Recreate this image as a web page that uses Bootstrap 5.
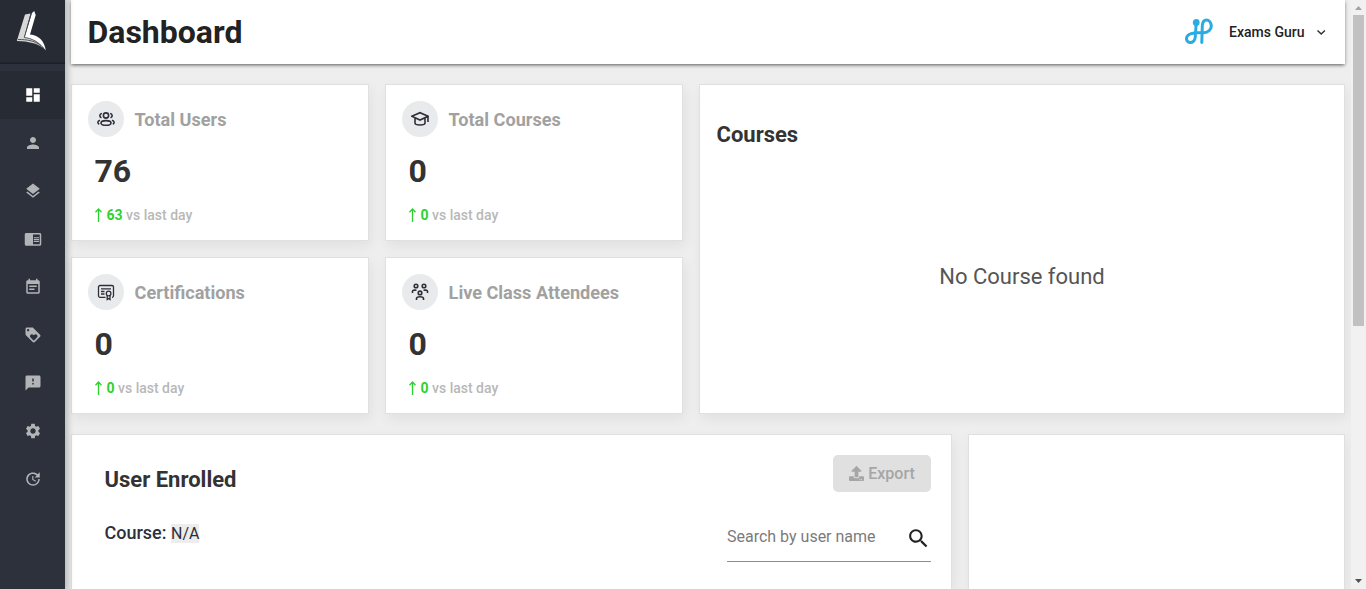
<!DOCTYPE html>
<html lang="en">
<head>
<meta charset="utf-8">
<meta name="viewport" content="width=device-width, initial-scale=1">
<title>Dashboard</title>
<link href="https://cdn.jsdelivr.net/npm/bootstrap@5.3.0/dist/css/bootstrap.min.css" rel="stylesheet">
<style>
body{font-family:Roboto,"Liberation Sans",sans-serif;background:#eee;color:#333;height:100vh}
.side{width:65px;background:#2d313b;box-shadow:0 0 6px 3px rgba(0,0,0,.22);z-index:3}
.brand{height:64px;background:#272b34;box-shadow:inset 0 -2px 2px -1px rgba(0,0,0,.4);margin-bottom:7px}
.side a{height:48px;color:#b3b4b8}
.side a svg{width:18px;height:18px;fill:currentColor}
.side a.active{background:#272b34;color:#fff}
.page{padding:0 6px}
.topbar{height:64px;background:#fff;padding:0 16.5px;box-shadow:0 2px 3px -1px rgba(0,0,0,.4),0 1px 4px rgba(0,0,0,.3);margin-bottom:20px}
.topbar h1{font-size:32px;font-weight:700;color:#222;line-height:40px}
.account{font-size:14px;font-weight:500;color:#222}
.tiles{display:grid;grid-template-columns:298px 298px 646px;grid-template-rows:157px 157px;gap:16px;margin-bottom:20px}
.panel{background:#fff;border:1px solid #e0e0e0;box-shadow:2px 5px 12px rgba(0,0,0,.06)}
.tall{grid-column:3;grid-row:1/3}
.tile{padding:16px}
.disc{width:36px;height:36px;background:#e9eaec}
.disc svg{width:18px;height:18px;fill:none;stroke:#2d303b;stroke-width:1.6}
.disc svg.fine{stroke-width:1.3}
.tile h2{font-size:18.1px;font-weight:700;color:#a1a1a1;line-height:24px;padding-top:2px;margin-left:10.6px}
.num{font-size:32px;font-weight:700;line-height:40px;margin:14px 0 0 6.5px}
.trend{font-size:14px;font-weight:500;line-height:20px;color:#b8b8b8;margin:14px 0 0 6px}
.trend b{color:#2bd22f;font-weight:700}
.trend svg{width:9px;height:14px;margin-right:3.5px;fill:none;stroke:#2bd22f;stroke-width:1.3}
.title{font-size:22px;font-weight:700;line-height:28px}
.tall .title{padding-left:.5px}
.none-found{font-size:22px;line-height:28px;color:#555;margin-top:114px}
.enrolled{width:881px;padding:20px 20px 0 32.5px}
.enrolled .title{margin-top:10.5px}
.extra{width:377px}
.export{height:37px;width:98px;background:#e0e0e0;color:#a6a6a6;font-size:16px;font-weight:500;border-radius:5px}
.course-row{margin-top:19px}
.course{font-size:18px;font-weight:500;color:#2d303b;line-height:24px}
.course span{font-size:16px;font-weight:400;background:#ededed;line-height:19px}
.search{width:204px;height:49px;border-bottom:1px solid #8d8d8d;font-size:16px;color:#7b7b7b}
.rail{width:15px;background:#f1f1f1;z-index:2}
.thumb{width:11px;height:311px;background:#c1c1c1}
</style>
<script src="https://cdn.jsdelivr.net/npm/bootstrap@5.3.0/dist/js/bootstrap.bundle.min.js"></script>
</head>
<body class="d-flex overflow-hidden">
<nav class="side d-flex flex-column flex-shrink-0 position-relative">
  <div class="brand d-flex justify-content-center flex-shrink-0">
    <svg class="me-1" width="32" height="64" viewBox="0 0 32 64"><path fill="#d8d8d8" d="M10 14.500l5.500-1-6 22.500 10 3c4 2 7 5 9 9.500C22 43 14 41.500 1.800 41z"/><path fill="#fff" d="M17 13l2.200-2 1.500 4L15 34.500c9 .5 14.500 7 15.800 16C25 42 18 38.500 9.500 37.200z"/><path fill="none" stroke="#444751" stroke-width=".9" d="M16 14L9.300 37.500C17 38.500 24 42 28.500 48.500M3 39.500c9 0 16 1 23 6"/></svg>
  </div>
  <a href="#" class="active d-flex align-items-center justify-content-center"><svg viewBox="0 0 24 24"><path d="M3 13h8V3H3v10zm0 8h8v-6H3v6zm10 0h8V11h-8v10zm0-18v6h8V3h-8z"/></svg></a>
  <a href="#" class="d-flex align-items-center justify-content-center"><svg viewBox="0 0 24 24"><path d="M12 12c2.210 0 4-1.790 4-4s-1.790-4-4-4-4 1.790-4 4 1.790 4 4 4zm0 2c-2.670 0-8 1.340-8 4v2h16v-2c0-2.660-5.330-4-8-4z"/></svg></a>
  <a href="#" class="d-flex align-items-center justify-content-center"><svg viewBox="0 0 24 24"><path d="M11.990 18.540l-7.370-5.730L3 14.070l9 7 9-7-1.630-1.270-7.380 5.740zM12 16l7.360-5.730L21 9l-9-7-9 7 1.630 1.270L12 16z"/></svg></a>
  <a href="#" class="d-flex align-items-center justify-content-center"><svg viewBox="0 0 24 24"><path d="M13 12h7v1.500h-7zm0-2.500h7V11h-7zm0 5h7V16h-7zM21 4H3c-1.100 0-2 .9-2 2v13c0 1.100.9 2 2 2h18c1.100 0 2-.9 2-2V6c0-1.100-.9-2-2-2zm0 15h-9V6h9v13z"/></svg></a>
  <a href="#" class="d-flex align-items-center justify-content-center"><svg viewBox="0 0 24 24"><path d="M17 10H7v2h10v-2zm2-7h-1V1h-2v2H8V1H6v2H5c-1.110 0-1.990.9-1.990 2L3 19c0 1.100.89 2 2 2h14c1.100 0 2-.9 2-2V5c0-1.100-.9-2-2-2zm0 16H5V8h14v11zm-5-5H7v2h7v-2z"/></svg></a>
  <a href="#" class="d-flex align-items-center justify-content-center"><svg viewBox="0 0 24 24"><path d="M21.410 11.580l-9-9C12.050 2.220 11.550 2 11 2H4c-1.100 0-2 .9-2 2v7c0 .55.22 1.050.59 1.420l9 9c.36.36.86.58 1.410.58.55 0 1.050-.22 1.410-.59l7-7c.37-.36.59-.86.59-1.410 0-.55-.23-1.060-.59-1.420zM5.500 7C4.670 7 4 6.330 4 5.500S4.670 4 5.500 4 7 4.670 7 5.500 6.330 7 5.500 7zm11.770 8.270L13 19.540l-4.270-4.270C8.280 14.810 8 14.190 8 13.500c0-1.380 1.120-2.500 2.500-2.500.69 0 1.320.28 1.770.74l.73.72.73-.73c.45-.45 1.080-.73 1.770-.73 1.380 0 2.500 1.120 2.500 2.500 0 .69-.28 1.320-.73 1.770z"/></svg></a>
  <a href="#" class="d-flex align-items-center justify-content-center"><svg viewBox="0 0 24 24"><path d="M20 2H4c-1.100 0-1.990.9-1.990 2L2 22l4-4h14c1.100 0 2-.9 2-2V4c0-1.100-.9-2-2-2zm-7 12h-2v-2h2v2zm0-4h-2V6h2v4z"/></svg></a>
  <a href="#" class="d-flex align-items-center justify-content-center"><svg viewBox="0 0 24 24"><path d="M19.140 12.940c.04-.3.060-.61.060-.94 0-.32-.02-.64-.07-.94l2.030-1.580c.18-.14.23-.41.12-.61l-1.920-3.320c-.12-.22-.37-.29-.59-.22l-2.390.96c-.5-.38-1.030-.7-1.620-.94l-.36-2.540c-.04-.24-.24-.41-.48-.41h-3.840c-.24 0-.43.17-.47.41l-.36 2.540c-.59.24-1.130.57-1.620.94l-2.390-.96c-.22-.08-.47 0-.59.22L2.740 8.870c-.12.21-.08.47.12.61l2.030 1.580c-.05.3-.09.63-.09.94s.02.640.070.940l-2.030 1.580c-.18.14-.23.41-.12.610l1.920 3.320c.12.22.37.29.59.22l2.390-.96c.5.38 1.030.7 1.620.940l.36 2.540c.05.24.24.41.48.41h3.840c.24 0 .44-.17.47-.41l.36-2.540c.59-.24 1.130-.56 1.620-.940l2.390.960c.22.080.47 0 .59-.22l1.920-3.320c.12-.22.07-.47-.12-.610l-2.010-1.580zM12 15.600c-1.980 0-3.600-1.620-3.600-3.600s1.620-3.600 3.600-3.600 3.600 1.620 3.600 3.600-1.620 3.600-3.600 3.600z"/></svg></a>
  <a href="#" class="d-flex align-items-center justify-content-center"><svg viewBox="0 0 24 24"><path d="M21 10.120h-6.780l2.740-2.820c-2.730-2.700-7.150-2.800-9.880-.1-2.730 2.710-2.730 7.080 0 9.790s7.150 2.710 9.880 0C18.320 15.650 19 14.080 19 12.100h2c0 1.980-.88 4.550-2.640 6.290-3.510 3.480-9.210 3.480-12.720 0-3.500-3.470-3.530-9.110-.02-12.580s9.140-3.470 12.650 0L21 3v7.120zM12.500 8v4.250l3.500 2.080-.72 1.210L11 13V8h1.500z"/></svg></a>
</nav>

<main class="page flex-grow-1 d-flex flex-column">
  <header class="topbar d-flex align-items-center justify-content-between flex-shrink-0">
    <h1 class="mb-0">Dashboard</h1>
    <div class="account d-flex align-items-center">
      <svg width="28" height="28" viewBox="0 0 28 28" fill="none" stroke="#2aace2" stroke-width="3" stroke-linecap="round"><path d="M11.200 5l-.9 14c-.3 4-3 6-5.500 5.500-3.500-.7-4.300-4.500-2-7 2-2.300 6-2.700 10-2.800h6c4.500 0 7.700-3.500 7.500-7C26 4.500 24 2 21.500 2c-3 0-4 3-4.200 6l-.5 16.500"/><circle cx="11.200" cy="4.500" r="1.900" fill="#2aace2"/></svg>
      <span class="ms-3">Exams Guru</span>
      <svg class="ms-2" width="16" height="16" viewBox="0 0 16 16" fill="none" stroke="#333" stroke-width="1.500"><path d="M4.500 6.500L8.200 10l3.700-3.500"/></svg>
    </div>
  </header>

  <section class="tiles flex-shrink-0">
    <div class="panel tile">
      <div class="d-flex align-items-center">
        <span class="disc rounded-circle d-flex align-items-center justify-content-center"><svg viewBox="0 0 18 18"><circle cx="9" cy="5.500" r="2.600"/><ellipse cx="9" cy="12.900" rx="5" ry="2.300"/><path d="M5 3.500C2.500 3.500 2 7 4.500 7.700M13 3.500c2.500 0 3 3.500.5 4.200M3 10.200c-2.500.8-2.800 3-.8 4M15 10.200c2.500.8 2.800 3 .8 4"/></svg></span>
        <h2 class="mb-0">Total Users</h2>
      </div>
      <div class="num">76</div>
      <p class="trend mb-0 d-flex align-items-center"><svg viewBox="0 0 9 14"><path d="M4.500 14V1M1.500 4.200l3-3.200 3 3.200"/></svg><span><b>63</b> vs last day</span></p>
    </div>
    <div class="panel tile">
      <div class="d-flex align-items-center">
        <span class="disc rounded-circle d-flex align-items-center justify-content-center"><svg viewBox="0 0 18 18"><path d="M.8 6.300L9 2.700l8 3.600L9 10zM4 8v5c0 1 2 2 5 2s5-1 5-2V8M17 6.500V12"/></svg></span>
        <h2 class="mb-0">Total Courses</h2>
      </div>
      <div class="num">0</div>
      <p class="trend mb-0 d-flex align-items-center"><svg viewBox="0 0 9 14"><path d="M4.500 14V1M1.500 4.200l3-3.200 3 3.200"/></svg><span><b>0</b> vs last day</span></p>
    </div>
    <div class="panel tile">
      <div class="d-flex align-items-center">
        <span class="disc rounded-circle d-flex align-items-center justify-content-center"><svg class="fine" viewBox="0 0 18 18"><path d="M8.500 14.300H3a1.500 1.500 0 0 1-1.500-1.500V4A1.500 1.500 0 0 1 3 2.500h12A1.500 1.500 0 0 1 16.500 4v8.800a1.500 1.500 0 0 1-1.500 1.500M4 5.800h10M4 8.500h3.500M4 11h3.500"/><circle cx="11.600" cy="10.500" r="2.300"/><path d="M10.200 12.500v4l1.400-1 1.400 1v-4"/></svg></span>
        <h2 class="mb-0">Certifications</h2>
      </div>
      <div class="num">0</div>
      <p class="trend mb-0 d-flex align-items-center"><svg viewBox="0 0 9 14"><path d="M4.500 14V1M1.500 4.200l3-3.200 3 3.200"/></svg><span><b>0</b> vs last day</span></p>
    </div>
    <div class="panel tile">
      <div class="d-flex align-items-center">
        <span class="disc rounded-circle d-flex align-items-center justify-content-center"><svg viewBox="0 0 18 18"><circle cx="5" cy="3" r="1.800"/><circle cx="13" cy="3" r="1.800"/><circle cx="9" cy="9.900" r="1.800"/><path d="M1.500 10V8.500C1.500 7.300 2.500 7 5.500 7.200M16.500 10V8.500c0-1.200-1-1.500-4-1.300M5.500 17v-1.500c0-1.700 1.200-1.700 3.500-1.700s3.500 0 3.500 1.700V17"/></svg></span>
        <h2 class="mb-0">Live Class Attendees</h2>
      </div>
      <div class="num">0</div>
      <p class="trend mb-0 d-flex align-items-center"><svg viewBox="0 0 9 14"><path d="M4.500 14V1M1.500 4.200l3-3.200 3 3.200"/></svg><span><b>0</b> vs last day</span></p>
    </div>
    <div class="panel tall d-flex flex-column p-3">
      <h2 class="title mt-3 pt-1 mb-0">Courses</h2>
      <p class="none-found text-center mb-0">No Course found</p>
    </div>
  </section>

  <section class="d-flex gap-3 flex-grow-1">
    <div class="panel enrolled border-bottom-0">
      <div class="d-flex justify-content-between align-items-start">
        <h2 class="title mb-0">User Enrolled</h2>
        <button class="export border-0 p-0 d-flex align-items-center justify-content-center" disabled>
          <svg class="me-1" width="15" height="15" viewBox="0 0 512 512" fill="#a6a6a6"><path d="M296 384h-80c-13.300 0-24-10.700-24-24V192h-87.700c-17.800 0-26.700-21.500-14.100-34.100L242.300 5.700c7.500-7.500 19.800-7.500 27.300 0l152.200 152.200c12.600 12.600 3.700 34.100-14.100 34.100H320v168c0 13.300-10.700 24-24 24zm216-8v112c0 13.300-10.700 24-24 24H24c-13.300 0-24-10.700-24-24V376c0-13.300 10.700-24 24-24h136v8c0 30.900 25.100 56 56 56h80c30.900 0 56-25.100 56-56v-8h136c13.300 0 24 10.700 24 24zm-124 88c0-11-9-20-20-20s-20 9-20 20 9 20 20 20 20-9 20-20zm64 0c0-11-9-20-20-20s-20 9-20 20 9 20 20 20 20-9 20-20z"/></svg>
          <span>Export</span>
        </button>
      </div>
      <div class="course-row d-flex justify-content-between align-items-start">
        <div class="course mt-2">Course: <span>N/A</span></div>
        <div class="search d-flex align-items-center justify-content-between">
          <span>Search by user name</span>
          <svg class="mt-1" width="25" height="25" viewBox="0 0 24 24" fill="#222"><path d="M15.500 14h-.79l-.28-.27C15.410 12.590 16 11.110 16 9.500 16 5.910 13.090 3 9.500 3S3 5.910 3 9.500 5.910 16 9.500 16c1.610 0 3.090-.59 4.230-1.570l.27.28v.79l5 4.990L20.490 19l-4.990-5zm-6 0C7.010 14 5 11.990 5 9.500S7.010 5 9.500 5 14 7.010 14 9.500 11.990 14 9.500 14z"/></svg>
        </div>
      </div>
    </div>
    <div class="panel extra border-bottom-0"></div>
  </section>
</main>

<div class="rail d-flex flex-column align-items-center flex-shrink-0">
  <svg width="15" height="15" viewBox="0 0 15 15"><path d="M4 10l3.500-4L11 10z" fill="#a3a3a3"/></svg>
  <div class="thumb"></div>
  <svg class="mt-auto" width="15" height="15" viewBox="0 0 15 15"><path d="M4 5l3.500 4L11 5z" fill="#505050"/></svg>
</div>
</body>
</html>
